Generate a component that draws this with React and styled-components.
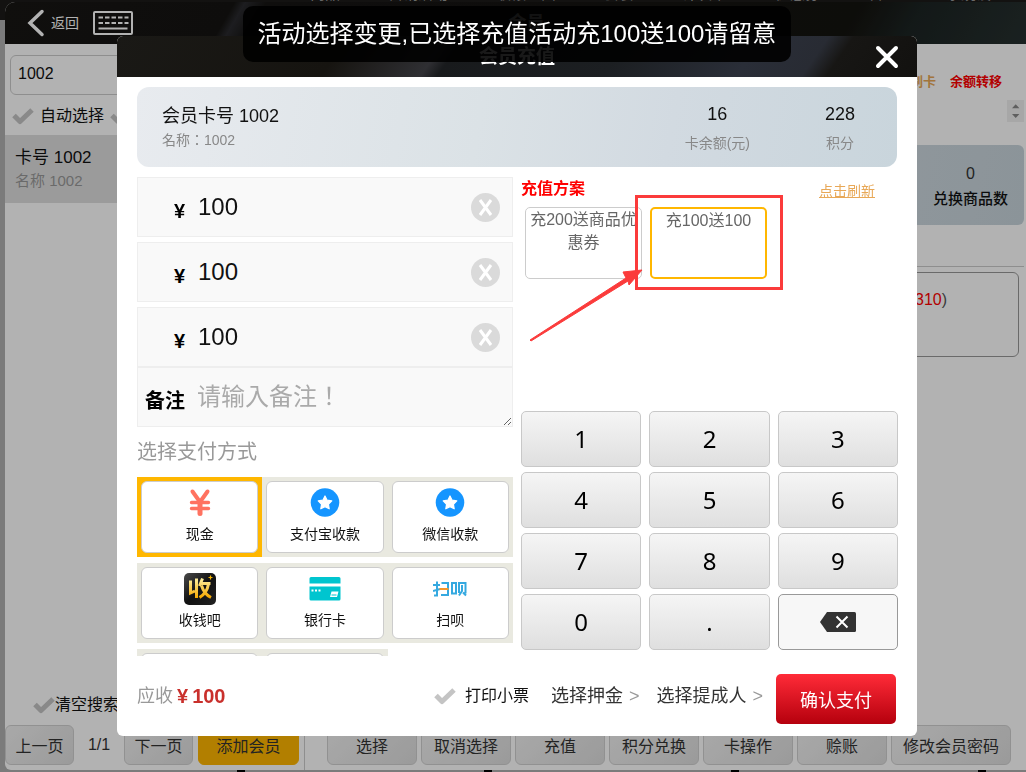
import * as React from "react"
import styled, { createGlobalStyle, css } from "styled-components"

const GlobalStyle = createGlobalStyle`
  * {
    box-sizing: border-box;
  }
  body {
    margin: 0;
    background: #b0b0b0;
    color: #111;
    font-family: "Liberation Sans", "Noto Sans CJK SC", sans-serif;
  }
  button, input, textarea {
    font-family: inherit;
    color: inherit;
    margin: 0;
  }
`

// full-width punctuation sits in the middle of its cell in this one
const centredPunctuation = css`
  font-family: "Liberation Sans", "Noto Sans CJK TC", sans-serif;
`

const Page = styled.div`
  display: flex;
  flex-direction: column;
  height: 100vh;
  min-height: 760px;
  padding: 2px 0 2px 5px;
  position: relative;
  overflow: hidden;
`

const BackBar = styled.div`
  position: absolute;
  top: 0;
  left: 0;
  right: 0;
  height: 20px;
  background: #1c1b19;
`

const BackNav = styled.nav`
  display: flex;
  gap: 48px;
  margin-top: -16px;
  padding-left: 310px;
  font-size: 15px;
  line-height: 20px;
  color: #999;
  white-space: nowrap;
`

const BackTicks = styled.div`
  position: absolute;
  bottom: 0;
  left: 237px;
  display: flex;
  gap: 239px;
`

const BackTick = styled.span`
  width: 8px;
  height: 2px;
  background: #000;
`

const Window = styled.div`
  position: relative;
  flex: 1;
  display: flex;
  flex-direction: column;
  min-height: 0;
  background: #fff;
  border-radius: 10px 0 0 6px;
  overflow: hidden;
`

const WindowHeader = styled.header`
  background: linear-gradient(120deg, #171614 0%, #151412 22%, #2a2a2e 23%, #161514 25%, #14130f 82%, #1c2423 88%, #26302f 100%);
  height: 42px;
  display: grid;
  grid-template-columns: 1fr auto 1fr;
  align-items: center;
  color: #fff;
  padding-left: 22px;
`

const HeaderTools = styled.div`
  display: flex;
  align-items: center;
  gap: 14px;
`

const IconButton = styled.button`
  display: flex;
  align-items: center;
  gap: 6px;
  padding: 0;
  border: 0;
  background: none;
  color: #fff;
  font-size: 14px;
  line-height: 20px;
  cursor: pointer;
`

const WindowTitle = styled.h1`
  margin: 0;
  font-size: 18px;
  line-height: 24px;
`

const WindowBody = styled.div`
  flex: 1;
  display: grid;
  grid-template-columns: 300px 1fr;
  min-height: 0;
`

const Side = styled.aside`
  display: flex;
  flex-direction: column;
  border-right: 1px solid #ccc;
  padding-top: 11px;
`

const SearchInput = styled.input`
  margin: 0 5px;
  height: 40px;
  border: 1px solid #ccc;
  border-radius: 6px;
  background: #fff;
  padding: 0 7px 2px;
  font-size: 16px;
`

const CheckRow = styled.div`
  display: flex;
  gap: 6px;
  padding: 11px 7px 9px;
`

const CheckLabel = styled.label`
  display: flex;
  align-items: center;
  gap: ${p => (p.$tight ? 0 : 6)}px;
  font-size: 16px;
  line-height: 20px;
  cursor: pointer;

  input {
    appearance: none;
    width: 0;
    height: 0;
    position: absolute;
  }
`

const MemberRow = styled.div`
  height: 68px;
  background: #dfdfdf;
  padding: 11px 10px;
`

const MemberNo = styled.div`
  font-size: 17px;
  line-height: 24px;
`

const MemberName = styled.div`
  font-size: 15px;
  line-height: 22px;
  color: #999;
`

const SideBottom = styled.div`
  margin-top: auto;
  padding-bottom: 5px;
`

const ClearRow = styled.div`
  padding: 0 28px 10px;
`

const Pager = styled.div`
  display: flex;
  align-items: center;
  gap: 5px;
`

const PageCount = styled.span`
  width: 40px;
  text-align: center;
  font-size: 16px;
  line-height: 20px;
  color: #333;
`

const BarButton = styled.button`
  height: 40px;
  min-width: ${p => p.$width}px;
  padding: 0;
  border: 1px solid ${p => (p.$accent ? "#ffb700" : "#d0d0d0")};
  border-radius: 6px;
  background: ${p => (p.$accent ? "#ffb700" : "linear-gradient(135deg, #f2f2f2, #dedede)")};
  font-size: 16px;
  color: #333;
  white-space: nowrap;
  cursor: pointer;
`

const Detail = styled.section`
  display: flex;
  flex-direction: column;
  padding: 28px 2px 5px 22px;
`

const LinkRow = styled.div`
  display: flex;
  justify-content: flex-end;
  gap: 14px;
  padding-right: 22px;
`

const BoldLink = styled.a`
  font-size: 13px;
  font-weight: bold;
  line-height: 20px;
  text-decoration: none;
  color: ${p => p.$color};
`

const Spinner = styled.div`
  align-self: flex-end;
  margin-top: 8px;
  width: 17px;
  height: 22px;
  background: #f0f0f0;
`

const StatCard = styled.div`
  margin-top: 23px;
  height: 80px;
  border-radius: 6px;
  background: linear-gradient(100deg, #e8ecf0, #d3dae1 60%, #c8d5dc);
  display: flex;
  justify-content: flex-end;
  padding: 16px 16px 0;
`

const Stat = styled.div`
  text-align: center;
  font-size: 15px;
  font-weight: 500;
  line-height: 24px;
`

const StatValue = styled.div`
  font-size: 16px;
  line-height: 26px;
  color: #333;
`

const RecordArea = styled.div`
  margin-top: 41px;
  border-top: 1px solid #ccc;
  padding: 5px 5px 0 0;
`

const RecordBox = styled.div`
  height: 85px;
  border: 1px solid #999;
  border-radius: 6px;
  text-align: right;
  padding: 15px 71px;
  font-size: 16px;
  line-height: 24px;
  color: #555;

  b {
    font-weight: normal;
    color: #f00;
  }
`

const ActionBar = styled.div`
  margin-top: auto;
  display: flex;
  gap: 4px;
`

const Overlay = styled.div`
  position: fixed;
  inset: 0;
  padding-left: 8px;
  background: rgba(0, 0, 0, 0.3);
  display: flex;
  align-items: center;
  justify-content: center;
`

const Modal = styled.div`
  position: relative;
  width: 100%;
  max-width: 800px;
  background: #fff;
  border-radius: 6px;
  overflow: hidden;
`

const ModalHeader = styled.header`
  background: linear-gradient(125deg, #1a1916 0%, #161410 28%, #2f2f33 40%, #181a1c 42%, #1c1f22 62%, #2a2e38 78%, #282b33 86%, #171614 89%, #12110f 100%);
  height: 41px;
  display: grid;
  grid-template-columns: 1fr auto 1fr;
  align-items: center;
  color: #fff;
  padding: 0 18px;
`

const ModalTitle = styled.h2`
  grid-column: 2;
  margin: 0;
  font-size: 19px;
  font-weight: bold;
  line-height: 24px;
`

const CloseButton = styled(IconButton)`
  justify-self: end;
`

const ModalBody = styled.div`
  padding: 10px 20px 0;
`

const MemberCard = styled.div`
  height: 80px;
  border-radius: 12px;
  background: linear-gradient(100deg, #e8ebef, #dbe2e6 45%, #d2dae1 70%, #c9d5dc);
  display: flex;
  justify-content: space-between;
  padding: 16px 35px 0 25px;
`

const CardName = styled.div`
  font-size: 18px;
  line-height: 26px;
`

const CardSub = styled.div`
  ${centredPunctuation}
  font-size: 14px;
  line-height: 22px;
  color: #888;
`

const CardFigures = styled.div`
  display: flex;
  gap: 68px;
`

const Figure = styled.div`
  min-width: 44px;
  text-align: center;
  font-size: 18px;
  line-height: 22px;
`

const FigureLabel = styled.div`
  margin-top: 8px;
  font-size: 14px;
  line-height: 20px;
  color: #888;
`

const Columns = styled.div`
  display: grid;
  grid-template-columns: 376px 1fr;
  gap: 8px;
  margin-top: 10px;
`

const Amounts = styled.div`
  display: flex;
  flex-direction: column;
  gap: 5px;
`

const Field = styled.div`
  display: flex;
  align-items: center;
  height: 60px;
  border: 1px solid #eee;
  background: #f9f9f9;
  padding-right: 12px;
`

const FieldLabel = styled.label`
  width: 47px;
  padding-top: 8px;
  text-align: right;
  font-size: 20px;
  font-weight: bold;
  line-height: 28px;
  white-space: nowrap;
  color: #000;
`

const AmountInput = styled.input`
  flex: 1;
  min-width: 0;
  height: 58px;
  margin-left: 13px;
  padding: 0;
  border: 0;
  outline: 0;
  background: none;
  font-size: 24px;
`

const RemarkField = styled(Field)`
  padding-right: 0;
`

const RemarkInput = styled.textarea`
  && {
    ${centredPunctuation}
  }
  flex: 1;
  min-width: 0;
  height: 58px;
  margin-left: 12px;
  padding: 12px 0;
  border: 0;
  outline: 0;
  background: none;
  font-size: 24px;
  line-height: 34px;
  overflow: hidden;
  resize: both;

  &::placeholder {
    color: #aaa;
  }
`

const PayTitle = styled.h3`
  margin: 10px 0;
  font-size: 20px;
  font-weight: normal;
  line-height: 30px;
  color: #999;
`

const PayGrid = styled.div`
  display: grid;
  grid-template-columns: repeat(3, 1fr);
  grid-auto-rows: 80px;
  row-gap: 6px;
  height: 179px;
  overflow: hidden;
`

const PayTile = styled.div`
  padding: 4px;
  background: ${p => (p.$active ? "#ffb700" : "#e9e9e0")};
`

const PayButton = styled.button`
  width: 100%;
  height: 72px;
  padding: 4px 0 7px;
  border: 1px solid #ccc;
  border-radius: 6px;
  background: #fff;
  font-size: 14px;
  line-height: 22px;
  display: flex;
  flex-direction: column;
  align-items: center;
  justify-content: space-between;
  cursor: pointer;

  svg {
    height: 34px;
  }
`

const Right = styled.div`
  display: flex;
  flex-direction: column;
  justify-content: space-between;
  padding-bottom: 6px;
  margin-right: -1px;
`

const PlanHead = styled.div`
  display: flex;
  justify-content: space-between;
  padding-right: 23px;
`

const PlanTitle = styled.h3`
  margin: 0;
  font-size: 16px;
  line-height: 24px;
  color: #f00;
`

const RefreshLink = styled.a`
  padding-top: 4px;
  font-size: 14px;
  line-height: 20px;
  color: #e8a857;
`

const Plans = styled.div`
  position: relative;
  display: flex;
  gap: 8px;
  padding: 6px 4px 0;
`

const PlanButton = styled.button`
  width: 117px;
  height: 72px;
  padding: 0;
  border: ${p => (p.$active ? "2px solid #ffb700" : "1px solid #ccc")};
  border-radius: 5px;
  background: #fff;
  display: flex;
  justify-content: center;
  font-size: 16px;
  line-height: 23px;
  color: #666;
  cursor: pointer;
`

/* marker drawn over the chosen plan */
const PlanMark = styled.svg`
  position: absolute;
  left: 8px;
  top: -7px;
  pointer-events: none;
`

const Keypad = styled.div`
  display: grid;
  grid-template-columns: repeat(3, 1fr);
  grid-auto-rows: 56px;
  gap: 5px 8px;
`

const Key = styled.button`
  padding: 0 0 ${p => (p.$plain ? 0 : 2)}px;
  border: 1px solid ${p => (p.$plain ? "#999" : "#c8c8c8")};
  border-radius: 5px;
  background: ${p => (p.$plain ? "#f7f7f7" : "linear-gradient(#f5f5f5, #dfdfdf)")};
  display: flex;
  align-items: center;
  justify-content: center;
  font-family: "Noto Sans", sans-serif;
  font-size: 24px;
  color: #000;
  cursor: pointer;
`

const ModalFooter = styled.footer`
  display: flex;
  align-items: center;
  justify-content: space-between;
  height: 80px;
  padding: 6px 21px 0 20px;
`

const Due = styled.div`
  display: flex;
  align-items: center;
  gap: 4px;
  padding-bottom: 6px;
  font-size: 18px;
  line-height: 26px;
  color: #999;

  b {
    font-size: 20px;
    color: #c9302c;
  }
`

const FooterActions = styled.div`
  display: flex;
  align-items: center;
`

const PrintOption = styled(CheckLabel)`
  gap: 9px;
  margin: 0 22px 6px 0;
`

const PickButton = styled.button`
  display: flex;
  align-items: center;
  gap: 6px;
  margin: 0 17px 6px 0;
  padding: 0;
  border: 0;
  background: none;
  font-size: 18px;
  line-height: 26px;
  color: #333;
  cursor: pointer;

  span {
    color: #999;
  }
`

const PickLast = styled(PickButton)`
  margin-right: 13px;
`

const ConfirmButton = styled.button`
  width: 120px;
  height: 50px;
  border: 0;
  border-radius: 5px;
  background: linear-gradient(#ff2b38, #b5000d);
  font-size: 18px;
  color: #fff;
  cursor: pointer;
`

const Toast = styled.div`
  position: fixed;
  top: 6px;
  left: 8px;
  right: 0;
  width: fit-content;
  margin: 0 auto;
  padding: 11px 15px;
  border-radius: 10px;
  background: rgba(0, 0, 0, 0.9);
  color: #fff;
  font-size: 24px;
  line-height: 34px;
  white-space: nowrap;
`

const CheckIcon = ({ color = "#c4c4c4" }) => (
  <svg width="22" height="18" viewBox="0 0 22 18" fill="none">
    <path d="M2 8.5l6 6L20 3" stroke={color} strokeWidth="5" strokeLinejoin="round" />
  </svg>
)

const BackIcon = () => (
  <svg width="18" height="28" viewBox="0 0 18 28" fill="none">
    <path d="M15 2.500L3 14l12 11.500" stroke="#fff" strokeWidth="3.500" strokeLinecap="round" />
  </svg>
)

const KeyboardIcon = () => (
  <svg width="40" height="24" viewBox="0 0 40 24" fill="none" stroke="#fff">
    <rect x="1" y="1" width="38" height="22" rx="1" strokeWidth="2" />
    <path d="M5.500 6.500h30M5.500 12h30" strokeWidth="2" strokeDasharray="4.500 2" />
    <path d="M5.500 17.500h29" strokeWidth="2" />
  </svg>
)

const CloseIcon = () => (
  <svg width="24" height="24" viewBox="0 0 24 24">
    <path d="M3 3l18 18M21 3L3 21" stroke="#fff" strokeWidth="4" strokeLinecap="round" />
  </svg>
)

const ClearIcon = () => (
  <svg width="29" height="29" viewBox="0 0 29 29">
    <circle cx="14.5" cy="14.5" r="14.5" fill="#dadada" />
    <path d="M9 7l11 15M20 7L9 22" stroke="#fff" strokeWidth="3" />
  </svg>
)

const SpinnerIcon = () => (
  <svg width="17" height="22" viewBox="0 0 17 22" fill="#888">
    <path d="M5 8.2l3.7-4 3.7 4zM5 14h7.4l-3.7 4z" />
  </svg>
)

const BackspaceIcon = () => (
  <svg width="36" height="20" viewBox="0 0 36 20">
    <path d="M7 0h27.500Q36 0 36 1.500v17Q36 20 34.500 20H7L0 10z" fill="#333" />
    <path d="M16.500 4.500l11 11M27.500 4.500l-11 11" stroke="#fff" strokeWidth="2" />
  </svg>
)

const CashIcon = () => (
  <svg width="34" height="34" viewBox="0 0 34 34" fill="none" stroke="#ff7260" strokeLinecap="round">
    <path d="M9.500 5.500L17 16l7.500-10.500" strokeWidth="4" />
    <path d="M17 17v10.500" strokeWidth="5" />
    <path d="M8.500 16.500h17M8.500 22.500h17" strokeWidth="3.400" />
  </svg>
)

const StarIcon = () => (
  <svg width="34" height="34" viewBox="0 0 34 34">
    <circle cx="17" cy="16.500" r="14.300" fill="#1595ff" />
    <path
      d="M17 10l2.100 4.200 4.700.7-3.400 3.300.8 4.600-4.200-2.200-4.200 2.200.8-4.600-3.400-3.300 4.700-.7z"
      fill="#fff"
      stroke="#fff"
      strokeWidth="1.200"
      strokeLinejoin="round"
    />
  </svg>
)

const ShouIcon = () => (
  <svg width="32" height="34" viewBox="0 0 32 34">
    <defs>
      <linearGradient id="shouBg" x1="0" y1="0" x2="1" y2="1">
        <stop offset="0" stopColor="#4a4a4a" />
        <stop offset="0.5" stopColor="#111" />
        <stop offset="1" stopColor="#222" />
      </linearGradient>
      <linearGradient id="shouGold" x1="0" y1="0" x2="0" y2="1">
        <stop offset="0" stopColor="#fff0a0" />
        <stop offset="1" stopColor="#f5a800" />
      </linearGradient>
    </defs>
    <rect y="1" width="32" height="32" rx="5" fill="url(#shouBg)" />
    <g fill="none" stroke="url(#shouGold)" strokeWidth="3">
      <path d="M6.500 8.500v12.500l4.500-2M12.500 6.500v19.500" />
      <path d="M18.500 6.500L15.500 14M17 11.500h9.500M24.500 12q-1.500 9-9 13.500M17.500 13.500q2.500 8.500 9.500 12" />
    </g>
    <path d="M26.500 3.500v4M24.500 5.500h4" stroke="#f5b400" strokeWidth="1.200" />
  </svg>
)

const BankIcon = () => (
  <svg width="32" height="34" viewBox="0 0 32 34" fill="#00c5cf">
    <path d="M2 5h28q1.500 0 1.500 1.500v5H.5v-5Q.5 5 2 5zM.5 14.500h31v12.500q0 1.500-1.500 1.500H2Q.5 28.500.5 27z" />
    <path d="M2.500 17.500h2v2h-2zM6 17.500h2v2H6zM9.500 17.500h2v2h-2zM22.500 19.500h7l-1.500 5.500h-7z" fill="#fff" />
    <path d="M22.500 23h5" stroke="#00c5cf" />
  </svg>
)

const SaobeiIcon = () => (
  <svg width="34" height="34" viewBox="0 0 34 34" fill="none" stroke="#35a9e0" strokeWidth="2">
    <path d="M0 13h7M4 9.500v14H1M0 19l7-2" />
    <path d="M8.500 11h6.500v12H8" />
    <path d="M6.500 17h9" stroke="#f5962a" />
    <path d="M19 11v10.500h4V11zM26 21V11h6.500v10.500M29 13v6l-3 4.500M30 20.500l3 3" />
  </svg>
)

const payMethods = [
  { name: "现金", Icon: CashIcon, active: true },
  { name: "支付宝收款", Icon: StarIcon },
  { name: "微信收款", Icon: StarIcon },
  { name: "收钱吧", Icon: ShouIcon },
  { name: "银行卡", Icon: BankIcon },
  { name: "扫呗", Icon: SaobeiIcon },
  { name: "" },
  { name: "" },
]

const navItems = ["商品", "营销活动", "收银主面", "套餐", "计次卡", "优惠券", "管理", "系统设置"]
const amountIds = ["amount-pay", "amount-recharge", "amount-total"]
const keys = ["1", "2", "3", "4", "5", "6", "7", "8", "9", "0", "."]
const actions = ["选择", "取消选择", "充值", "积分兑换", "卡操作", "赊账"]

const MemberWindow = () => (
  <Window>
    <WindowHeader>
      <HeaderTools>
        <IconButton>
          <BackIcon />
          返回
        </IconButton>
        <IconButton aria-label="键盘">
          <KeyboardIcon />
        </IconButton>
      </HeaderTools>
      <WindowTitle>会员</WindowTitle>
    </WindowHeader>
    <WindowBody>
      <Side>
        <SearchInput aria-label="搜索会员" defaultValue="1002" />
        <CheckRow>
          <CheckLabel>
            <input type="checkbox" />
            <CheckIcon />
            自动选择
          </CheckLabel>
          <CheckLabel>
            <input type="checkbox" aria-label="模糊搜索" />
            <CheckIcon />
          </CheckLabel>
        </CheckRow>
        <MemberRow>
          <MemberNo>卡号 1002</MemberNo>
          <MemberName>名称 1002</MemberName>
        </MemberRow>
        <SideBottom>
          <ClearRow>
            <CheckLabel $tight>
              <input type="checkbox" />
              <CheckIcon />
              清空搜索
            </CheckLabel>
          </ClearRow>
          <Pager>
            <BarButton $width={69}>上一页</BarButton>
            <PageCount>1/1</PageCount>
            <BarButton $width={69}>下一页</BarButton>
            <BarButton $width={101} $accent>添加会员</BarButton>
          </Pager>
        </SideBottom>
      </Side>
      <Detail>
        <LinkRow>
          <BoldLink href="#card" $color="#e8a857">刷卡</BoldLink>
          <BoldLink href="#transfer" $color="#f00">余额转移</BoldLink>
        </LinkRow>
        <Spinner>
          <SpinnerIcon />
        </Spinner>
        <StatCard>
          <Stat>
            <StatValue>0</StatValue>
            兑换商品数
          </Stat>
        </StatCard>
        <RecordArea>
          <RecordBox>
            (<b>1310</b>)
          </RecordBox>
        </RecordArea>
        <ActionBar>
          {actions.map(name => (
            <BarButton key={name} $width={90}>{name}</BarButton>
          ))}
          <BarButton $width={120}>修改会员密码</BarButton>
        </ActionBar>
      </Detail>
    </WindowBody>
  </Window>
)

const RechargeModal = () => (
  <Modal role="dialog" aria-label="会员充值">
    <ModalHeader>
      <ModalTitle>会员充值</ModalTitle>
      <CloseButton aria-label="关闭">
        <CloseIcon />
      </CloseButton>
    </ModalHeader>
    <ModalBody>
      <MemberCard>
        <div>
          <CardName>会员卡号 1002</CardName>
          <CardSub>名称：1002</CardSub>
        </div>
        <CardFigures>
          <Figure>
            16
            <FigureLabel>卡余额(元)</FigureLabel>
          </Figure>
          <Figure>
            228
            <FigureLabel>积分</FigureLabel>
          </Figure>
        </CardFigures>
      </MemberCard>
      <Columns>
        <div>
          <Amounts>
            {amountIds.map(id => (
              <Field key={id}>
                <FieldLabel htmlFor={id}>¥</FieldLabel>
                <AmountInput id={id} defaultValue="100" />
                <IconButton aria-label="清除">
                  <ClearIcon />
                </IconButton>
              </Field>
            ))}
          </Amounts>
          <RemarkField>
            <FieldLabel htmlFor="remark">备注</FieldLabel>
            <RemarkInput id="remark" placeholder="请输入备注！" />
          </RemarkField>
          <PayTitle>选择支付方式</PayTitle>
          <PayGrid>
            {payMethods.map(({ name, Icon, active }, i) => (
              <PayTile key={i} $active={active}>
                <PayButton>
                  {Icon && <Icon />}
                  {name}
                </PayButton>
              </PayTile>
            ))}
          </PayGrid>
        </div>
        <Right>
          <div>
            <PlanHead>
              <PlanTitle>充值方案</PlanTitle>
              <RefreshLink href="#refresh">点击刷新</RefreshLink>
            </PlanHead>
            <Plans>
              <PlanButton>充200送商品优惠券</PlanButton>
              <PlanButton $active>充100送100</PlanButton>
              <PlanMark width="256" height="148" viewBox="0 0 256 148">
                <rect x="107.500" y="2.500" width="145" height="92" fill="none" stroke="#fb3b3b" strokeWidth="3" />
                <path d="M1 146L97 84l-3-6 19-2-13 15-1-4L2 147z" fill="#fb3b3b" stroke="#fb3b3b" />
              </PlanMark>
            </Plans>
          </div>
          <Keypad>
            {keys.map(k => (
              <Key key={k}>{k}</Key>
            ))}
            <Key $plain aria-label="退格">
              <BackspaceIcon />
            </Key>
          </Keypad>
        </Right>
      </Columns>
    </ModalBody>
    <ModalFooter>
      <Due>
        应收
        <b>¥</b>
        <b>100</b>
      </Due>
      <FooterActions>
        <PrintOption>
          <input type="checkbox" />
          <CheckIcon />
          打印小票
        </PrintOption>
        <PickButton>
          选择押金<span>&gt;</span>
        </PickButton>
        <PickLast>
          选择提成人<span>&gt;</span>
        </PickLast>
        <ConfirmButton>确认支付</ConfirmButton>
      </FooterActions>
    </ModalFooter>
  </Modal>
)

const App = () => (
  <>
    <GlobalStyle />
    <Page>
      <BackBar>
        <BackNav>
          {navItems.map(item => (
            <span key={item}>{item}</span>
          ))}
        </BackNav>
      </BackBar>
      <BackTicks>
        <BackTick />
        <BackTick />
        <BackTick />
        <BackTick />
      </BackTicks>
      <MemberWindow />
    </Page>
    <Overlay>
      <RechargeModal />
    </Overlay>
    <Toast role="status">活动选择变更,已选择充值活动充100送100请留意</Toast>
  </>
)

export default App
